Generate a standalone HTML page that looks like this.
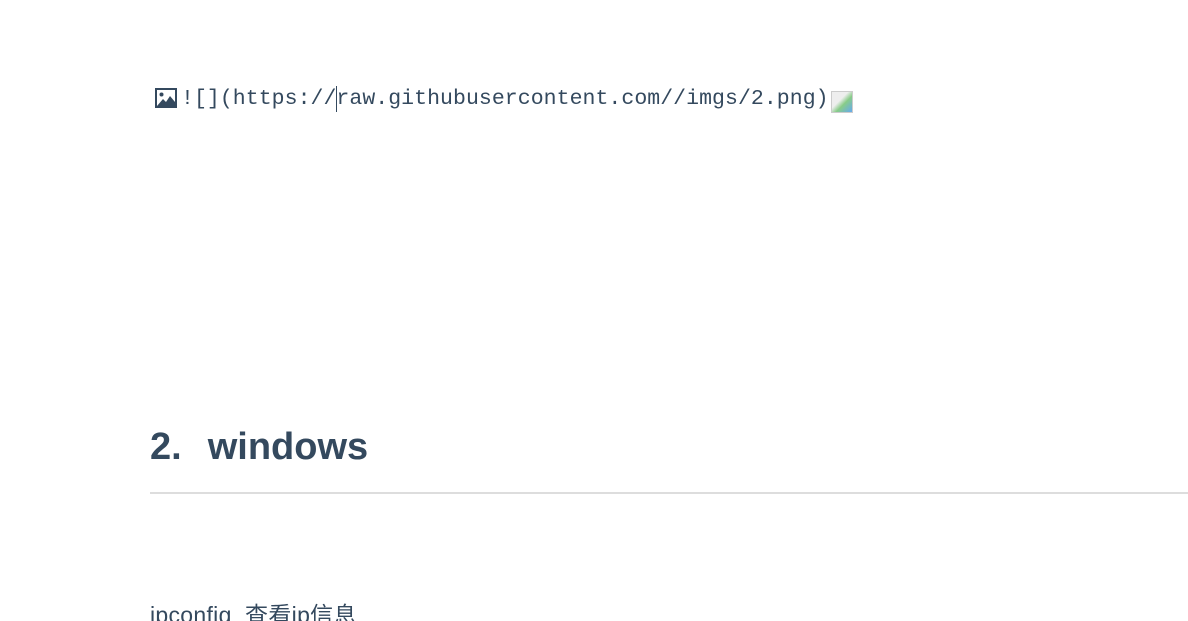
<!DOCTYPE html>
<html><head><meta charset="utf-8"><style>
html,body{margin:0;padding:0;background:#fff;width:1188px;height:621px;overflow:hidden;position:relative;color:#34495e}
.code{position:absolute;left:181px;top:84px;font-family:"Liberation Mono",monospace;font-size:21.5px;letter-spacing:0.05px;line-height:30px;white-space:pre;color:#34495e}
.icon{position:absolute;left:155px;top:88px}
.caret{position:absolute;left:336px;top:86px;width:1px;height:26px;background:#34495e}
.broken{position:absolute;left:831px;top:91px;width:22px;height:22px;border:1px solid #ccc;box-sizing:border-box;background:linear-gradient(135deg,#eee 40%,#8c8 60%,#6ae 100%)}
h2{position:absolute;left:150px;top:420px;margin:0;font-family:"Liberation Sans",sans-serif;font-weight:bold;font-size:38px;line-height:54px;color:#34495e}
h2 span{margin-left:26px}
.hr{position:absolute;left:150px;top:492px;width:1038px;height:2px;background:#ddd}
p{position:absolute;left:150px;top:599px;margin:0;font-family:"Liberation Sans","Noto Sans CJK SC",sans-serif;font-size:23px;line-height:32px;color:#34495e;letter-spacing:0.3px}
</style></head><body>
<svg class="icon" width="22" height="20" viewBox="0 0 22 20"><rect x="0" y="0" width="22" height="20" fill="#34495e"/><rect x="2" y="2" width="18" height="16" fill="#fff"/><circle cx="6.5" cy="6.5" r="2" fill="#34495e"/><path d="M2 18 L8 11 L11 14 L15 8 L20 14 L20 18 Z" fill="#34495e"/></svg>
<div class="code">![](https://raw.githubusercontent.com//imgs/2.png)</div>
<div class="caret"></div>
<div class="broken"></div>
<h2>2.<span>windows</span></h2>
<div class="hr"></div>
<p>ipconfig&nbsp; 查看ip信息</p>
</body></html>
